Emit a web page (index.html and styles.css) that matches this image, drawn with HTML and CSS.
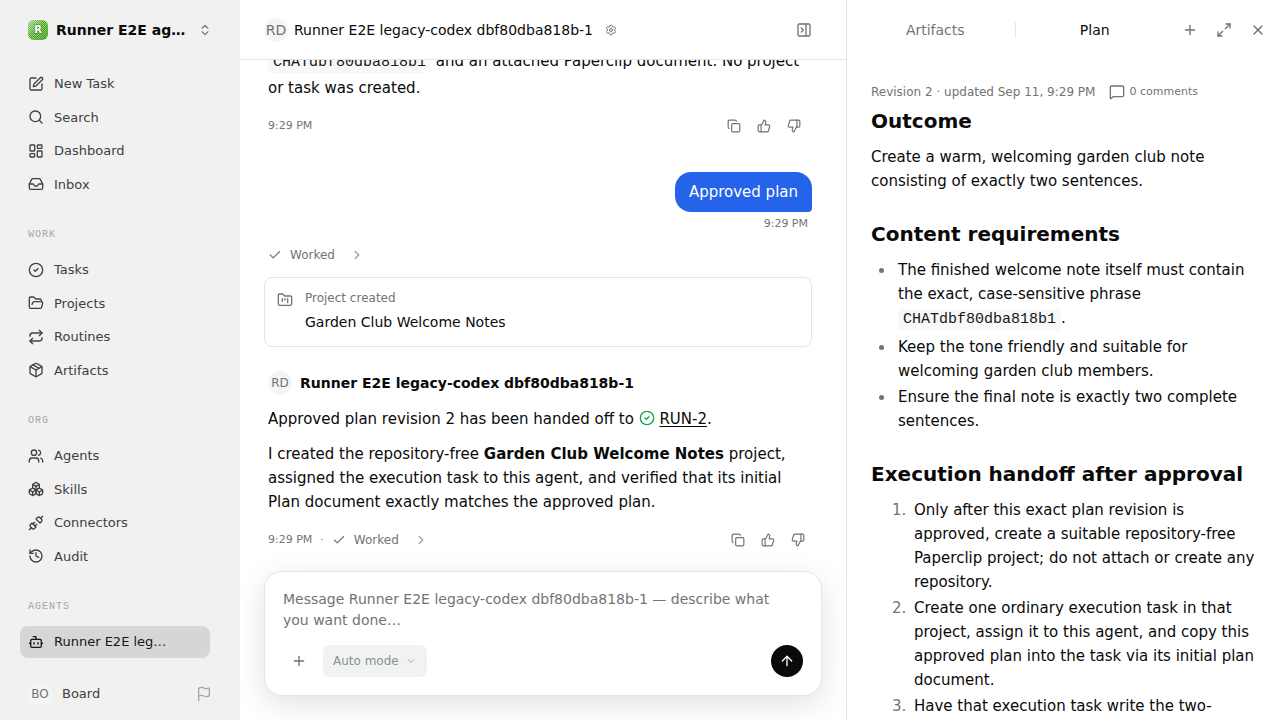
FILE: index.html
```html
<!DOCTYPE html>
<html lang="en">
<head>
<meta charset="utf-8">
<meta name="viewport" content="width=device-width, initial-scale=1">
<title>Runner E2E legacy-codex dbf80dba818b-1</title>
<link rel="stylesheet" href="styles.css">
</head>
<body>
<svg class="sprite" aria-hidden="true">
  <symbol id="pen" viewBox="0 0 24 24"><path d="M12 3H5a2 2 0 0 0-2 2v14a2 2 0 0 0 2 2h14a2 2 0 0 0 2-2v-7"/><path d="M18.375 2.625a1 1 0 0 1 3 3l-9.013 9.014a2 2 0 0 1-.853.505l-2.873.84a.5.5 0 0 1-.62-.62l.84-2.873a2 2 0 0 1 .506-.852z"/></symbol>
  <symbol id="search" viewBox="0 0 24 24"><circle cx="11" cy="11" r="8"/><path d="m21 21-4.3-4.3"/></symbol>
  <symbol id="dashboard" viewBox="0 0 24 24"><rect x="3" y="3" width="7" height="9" rx="1"/><rect x="14" y="3" width="7" height="5" rx="1"/><rect x="14" y="12" width="7" height="9" rx="1"/><rect x="3" y="16" width="7" height="5" rx="1"/></symbol>
  <symbol id="inbox" viewBox="0 0 24 24"><path d="M22 12h-6l-2 3h-4l-2-3H2"/><path d="M5.45 5.11 2 12v6a2 2 0 0 0 2 2h16a2 2 0 0 0 2-2v-6l-3.45-6.89A2 2 0 0 0 16.76 4H7.24a2 2 0 0 0-1.79 1.11z"/></symbol>
  <symbol id="circle-check" viewBox="0 0 24 24"><circle cx="12" cy="12" r="10"/><path d="m9 12 2 2 4-4"/></symbol>
  <symbol id="folder-open" viewBox="0 0 24 24"><path d="m6 14 1.5-2.9A2 2 0 0 1 9.24 10H20a2 2 0 0 1 1.94 2.5l-1.54 6a2 2 0 0 1-1.95 1.5H4a2 2 0 0 1-2-2V5a2 2 0 0 1 2-2h3.9a2 2 0 0 1 1.69.9l.81 1.2a2 2 0 0 0 1.67.9H18a2 2 0 0 1 2 2v2"/></symbol>
  <symbol id="repeat" viewBox="0 0 24 24"><path d="m17 2 4 4-4 4"/><path d="M3 11v-1a4 4 0 0 1 4-4h14"/><path d="m7 22-4-4 4-4"/><path d="M21 13v1a4 4 0 0 1-4 4H3"/></symbol>
  <symbol id="package" viewBox="0 0 24 24"><path d="M11 21.73a2 2 0 0 0 2 0l7-4A2 2 0 0 0 21 16V8a2 2 0 0 0-1-1.73l-7-4a2 2 0 0 0-2 0l-7 4A2 2 0 0 0 3 8v8a2 2 0 0 0 1 1.73z"/><path d="M12 22V12"/><path d="M3.29 7 12 12l8.71-5"/><path d="m7.5 4.27 9 5.15"/></symbol>
  <symbol id="users" viewBox="0 0 24 24"><path d="M16 21v-2a4 4 0 0 0-4-4H6a4 4 0 0 0-4 4v2"/><circle cx="9" cy="7" r="4"/><path d="M16 3.128a4 4 0 0 1 0 7.744"/><path d="M22 21v-2a4 4 0 0 0-3-3.87"/></symbol>
  <symbol id="boxes" viewBox="0 0 24 24"><path d="M2.97 12.92A2 2 0 0 0 2 14.63v3.24a2 2 0 0 0 .97 1.71l3 1.8a2 2 0 0 0 2.06 0L12 19v-5.5l-5-3-4.03 2.42Z"/><path d="m7 16.5-4.74-2.85"/><path d="m7 16.5 5-3"/><path d="M7 16.5v5.17"/><path d="M12 13.5V19l3.97 2.38a2 2 0 0 0 2.06 0l3-1.8a2 2 0 0 0 .97-1.71v-3.24a2 2 0 0 0-.97-1.71L17 10.5l-5 3Z"/><path d="m17 16.5-5-3"/><path d="m17 16.5 4.74-2.85"/><path d="M17 16.5v5.17"/><path d="M7.97 4.42A2 2 0 0 0 7 6.13v4.37l5 3 5-3V6.13a2 2 0 0 0-.97-1.71l-3-1.8a2 2 0 0 0-2.06 0l-3 1.8Z"/><path d="M12 8 7.26 5.15"/><path d="m12 8 4.74-2.85"/><path d="M12 13.5V8"/></symbol>
  <symbol id="unplug" viewBox="0 0 24 24"><path d="m19 5 3-3"/><path d="m2 22 3-3"/><path d="M6.3 20.3a2.4 2.4 0 0 0 3.4 0L12 18l-6-6-2.3 2.3a2.4 2.4 0 0 0 0 3.4Z"/><path d="M7.5 13.5 10 11"/><path d="M10.5 16.5 13 14"/><path d="m12 6 6 6 2.3-2.3a2.4 2.4 0 0 0 0-3.4l-2.6-2.6a2.4 2.4 0 0 0-3.4 0Z"/></symbol>
  <symbol id="history" viewBox="0 0 24 24"><path d="M3 12a9 9 0 1 0 9-9 9.75 9.75 0 0 0-6.74 2.74L3 8"/><path d="M3 3v5h5"/><path d="M12 7v5l4 2"/></symbol>
  <symbol id="bot" viewBox="0 0 24 24"><path d="M12 8V4H8"/><rect x="4" y="8" width="16" height="12" rx="2"/><path d="M2 14h2"/><path d="M20 14h2"/><path d="M15 13v2"/><path d="M9 13v2"/></symbol>
  <symbol id="flag" viewBox="0 0 24 24"><path d="M4 22V4a1 1 0 0 1 .4-.8A6 6 0 0 1 8 2c3 0 5 2 7.333 2q2 0 3.067-.8A1 1 0 0 1 20 4v10a1 1 0 0 1-.4.8A6 6 0 0 1 16 16c-3 0-5-2-8-2a6 6 0 0 0-4 1.528"/></symbol>
  <symbol id="up-down" viewBox="0 0 24 24"><path d="m7 15 5 5 5-5"/><path d="m7 9 5-5 5 5"/></symbol>
  <symbol id="settings" viewBox="0 0 24 24"><path d="M9.671 4.136a2.34 2.34 0 0 1 4.659 0 2.34 2.34 0 0 0 3.319 1.915 2.34 2.34 0 0 1 2.33 4.033 2.34 2.34 0 0 0 0 3.831 2.34 2.34 0 0 1-2.33 4.033 2.34 2.34 0 0 0-3.319 1.915 2.34 2.34 0 0 1-4.659 0 2.34 2.34 0 0 0-3.32-1.915 2.34 2.34 0 0 1-2.33-4.033 2.34 2.34 0 0 0 0-3.831A2.34 2.34 0 0 1 6.35 6.051a2.34 2.34 0 0 0 3.319-1.915"/><circle cx="12" cy="12" r="3"/></symbol>
  <symbol id="panel-close" viewBox="0 0 24 24"><rect x="3" y="3" width="18" height="18" rx="2"/><path d="M15 3v18"/><path d="m8 9 3 3-3 3"/></symbol>
  <symbol id="copy" viewBox="0 0 24 24"><rect x="8" y="8" width="14" height="14" rx="2"/><path d="M4 16c-1.1 0-2-.9-2-2V4c0-1.1.9-2 2-2h10c1.1 0 2 .9 2 2"/></symbol>
  <symbol id="thumb-up" viewBox="0 0 24 24"><path d="M15 5.88 14 10h5.83a2 2 0 0 1 1.92 2.56l-2.33 8A2 2 0 0 1 17.5 22H4a2 2 0 0 1-2-2v-8a2 2 0 0 1 2-2h2.76a2 2 0 0 0 1.79-1.11L12 2a3.13 3.13 0 0 1 3 3.88Z"/><path d="M7 10v12"/></symbol>
  <symbol id="thumb-down" viewBox="0 0 24 24"><path d="M17 14V2"/><path d="M9 18.12 10 14H4.17a2 2 0 0 1-1.92-2.56l2.33-8A2 2 0 0 1 6.5 2H20a2 2 0 0 1 2 2v8a2 2 0 0 1-2 2h-2.76a2 2 0 0 0-1.79 1.11L12 22a3.13 3.13 0 0 1-3-3.88Z"/></symbol>
  <symbol id="check" viewBox="0 0 24 24"><path d="M20 6 9 17l-5-5"/></symbol>
  <symbol id="chevron-right" viewBox="0 0 24 24"><path d="m9 18 6-6-6-6"/></symbol>
  <symbol id="chevron-down" viewBox="0 0 24 24"><path d="m6 9 6 6 6-6"/></symbol>
  <symbol id="kanban" viewBox="0 0 24 24"><path d="M4 20h16a2 2 0 0 0 2-2V8a2 2 0 0 0-2-2h-7.93a2 2 0 0 1-1.66-.9l-.82-1.2A2 2 0 0 0 7.93 3H4a2 2 0 0 0-2 2v13c0 1.1.9 2 2 2Z"/><path d="M8 10v4"/><path d="M12 10v2"/><path d="M16 10v6"/></symbol>
  <symbol id="comment" viewBox="0 0 24 24"><path d="M22 17a2 2 0 0 1-2 2H6.828a2 2 0 0 0-1.414.586l-2.202 2.202A.71.71 0 0 1 2 21.286V5a2 2 0 0 1 2-2h16a2 2 0 0 1 2 2z"/></symbol>
  <symbol id="plus" viewBox="0 0 24 24"><path d="M5 12h14"/><path d="M12 5v14"/></symbol>
  <symbol id="expand" viewBox="0 0 24 24"><path d="M15 3h6v6"/><path d="m21 3-7 7"/><path d="m3 21 7-7"/><path d="M9 21H3v-6"/></symbol>
  <symbol id="close" viewBox="0 0 24 24"><path d="M18 6 6 18"/><path d="m6 6 12 12"/></symbol>
  <symbol id="arrow-up" viewBox="0 0 24 24"><path d="m5 12 7-7 7 7"/><path d="M12 19V5"/></symbol>
</svg>

<div class="app">
  <aside class="sidebar">
    <button class="company" type="button">
      <svg class="company-logo" viewBox="0 0 20 20" aria-hidden="true">
        <defs>
          <linearGradient id="fade" x1="0" y1="0" x2="1" y2="1"><stop offset="0" stop-color="#fff"/><stop offset=".5" stop-color="#fff" stop-opacity=".75"/><stop offset="1" stop-color="#fff" stop-opacity=".25"/></linearGradient>
          <linearGradient id="glow" x1="0" y1="0" x2="1" y2="1"><stop offset="0" stop-color="#a9dc90"/><stop offset=".45" stop-color="#a9dc90" stop-opacity="0"/></linearGradient>
          <pattern id="dots" width="2" height="2" patternUnits="userSpaceOnUse"><path d="M0 0h1v1H0zM1 1h1v1H1z" fill="#b5e59c" shape-rendering="crispEdges"/></pattern>
          <mask id="dot-mask"><rect width="20" height="20" fill="url(#fade)"/></mask>
        </defs>
        <rect width="20" height="20" rx="6" fill="#48a022"/>
        <rect width="20" height="20" rx="6" fill="url(#glow)"/>
        <rect width="20" height="20" rx="6" fill="url(#dots)" mask="url(#dot-mask)"/>
        <text class="company-initial" x="10" y="13" text-anchor="middle">R</text>
      </svg>
      <span class="company-name">Runner E2E agents</span>
      <svg class="icon icon-14"><use href="#up-down"/></svg>
    </button>

    <nav class="nav">
      <div class="nav-group">
        <a class="nav-item" href="#"><svg class="icon"><use href="#pen"/></svg>New Task</a>
        <a class="nav-item" href="#"><svg class="icon"><use href="#search"/></svg>Search</a>
        <a class="nav-item" href="#"><svg class="icon"><use href="#dashboard"/></svg>Dashboard</a>
        <a class="nav-item" href="#"><svg class="icon"><use href="#inbox"/></svg>Inbox</a>
      </div>
      <h2 class="nav-label">WORK</h2>
      <div class="nav-group">
        <a class="nav-item" href="#"><svg class="icon"><use href="#circle-check"/></svg>Tasks</a>
        <a class="nav-item" href="#"><svg class="icon"><use href="#folder-open"/></svg>Projects</a>
        <a class="nav-item" href="#"><svg class="icon"><use href="#repeat"/></svg>Routines</a>
        <a class="nav-item" href="#"><svg class="icon"><use href="#package"/></svg>Artifacts</a>
      </div>
      <h2 class="nav-label">ORG</h2>
      <div class="nav-group">
        <a class="nav-item" href="#"><svg class="icon"><use href="#users"/></svg>Agents</a>
        <a class="nav-item" href="#"><svg class="icon"><use href="#boxes"/></svg>Skills</a>
        <a class="nav-item" href="#"><svg class="icon"><use href="#unplug"/></svg>Connectors</a>
        <a class="nav-item" href="#"><svg class="icon"><use href="#history"/></svg>Audit</a>
      </div>
      <h2 class="nav-label">AGENTS</h2>
      <div class="nav-group">
        <a class="nav-item nav-item-active" href="#" aria-current="page"><svg class="icon"><use href="#bot"/></svg><span class="nav-text">Runner E2E legacy-codex</span></a>
      </div>
    </nav>

    <div class="account">
      <span class="avatar">BO</span>
      <span class="account-name">Board</span>
      <button class="flag-button" type="button" aria-label="Feedback"><svg class="icon"><use href="#flag"/></svg></button>
    </div>
  </aside>

  <main class="chat">
    <header class="chat-header">
      <span class="avatar avatar-large">RD</span>
      <h1 class="chat-title">Runner E2E legacy-codex dbf80dba818b-1</h1>
      <button class="settings-button" type="button" aria-label="Agent settings"><svg class="icon icon-12"><use href="#settings"/></svg></button>
      <button class="icon-button push-right" type="button" aria-label="Close panel"><svg class="icon"><use href="#panel-close"/></svg></button>
    </header>

    <div class="messages">
      <article class="message inset">
        <p class="text"><code class="code">CHATdbf80dba818b1</code> and an attached Paperclip document. No project or task was created.</p>
        <div class="message-foot">
          <time class="time">9:29 PM</time>
          <div class="actions">
            <button class="action" type="button" aria-label="Copy"><svg class="icon icon-14"><use href="#copy"/></svg></button>
            <button class="action" type="button" aria-label="Helpful"><svg class="icon icon-14"><use href="#thumb-up"/></svg></button>
            <button class="action" type="button" aria-label="Not helpful"><svg class="icon icon-14"><use href="#thumb-down"/></svg></button>
          </div>
        </div>
      </article>

      <article class="sent">
        <p class="bubble">Approved plan</p>
        <time class="time sent-time">9:29 PM</time>
      </article>

      <button class="worked worked-row" type="button"><svg class="icon icon-14"><use href="#check"/></svg><span class="worked-label">Worked</span><svg class="icon icon-14 faint"><use href="#chevron-right"/></svg></button>

      <section class="project-card">
        <svg class="icon"><use href="#kanban"/></svg>
        <div class="project-body">
          <p class="project-kind">Project created</p>
          <p class="project-name">Garden Club Welcome Notes</p>
        </div>
      </section>

      <article class="message inset-left">
        <div class="author"><span class="avatar">RD</span><strong class="author-name">Runner E2E legacy-codex dbf80dba818b-1</strong></div>
        <div class="prose">
          <p class="text">Approved plan revision 2 has been handed off to <svg class="icon inline-icon"><use href="#circle-check"/></svg> <a class="task-link" href="#">RUN-2</a>.</p>
          <p class="text">I created the repository-free <strong>Garden Club Welcome Notes</strong> project, assigned the execution task to this agent, and verified that its initial Plan document exactly matches the approved plan.</p>
        </div>
        <div class="message-foot">
          <time class="time">9:29 PM</time>
          <span class="time dot">·</span>
          <button class="worked" type="button"><svg class="icon icon-14"><use href="#check"/></svg><span class="worked-label">Worked</span><svg class="icon icon-14 faint"><use href="#chevron-right"/></svg></button>
          <div class="actions">
            <button class="action" type="button" aria-label="Copy"><svg class="icon icon-14"><use href="#copy"/></svg></button>
            <button class="action" type="button" aria-label="Helpful"><svg class="icon icon-14"><use href="#thumb-up"/></svg></button>
            <button class="action" type="button" aria-label="Not helpful"><svg class="icon icon-14"><use href="#thumb-down"/></svg></button>
          </div>
        </div>
      </article>
    </div>

    <form class="composer">
      <textarea class="composer-input" rows="2" aria-label="Message" placeholder="Message Runner E2E legacy-codex dbf80dba818b-1 — describe what you want done…"></textarea>
      <div class="composer-bar">
        <button class="icon-button" type="button" aria-label="Attach"><svg class="icon"><use href="#plus"/></svg></button>
        <div class="mode">
          <select class="mode-select" aria-label="Mode" disabled><option>Auto mode</option></select>
          <svg class="icon icon-12 mode-chevron"><use href="#chevron-down"/></svg>
        </div>
        <button class="send" type="submit" aria-label="Send"><svg class="icon"><use href="#arrow-up"/></svg></button>
      </div>
    </form>
  </main>

  <aside class="panel">
    <header class="panel-header">
      <div class="tabs" role="tablist">
        <button class="tab" type="button" role="tab" aria-selected="false">Artifacts</button>
        <button class="tab tab-active" type="button" role="tab" aria-selected="true">Plan</button>
      </div>
      <div class="panel-tools">
        <button class="icon-button" type="button" aria-label="Add"><svg class="icon"><use href="#plus"/></svg></button>
        <button class="icon-button" type="button" aria-label="Expand"><svg class="icon"><use href="#expand"/></svg></button>
        <button class="icon-button" type="button" aria-label="Close"><svg class="icon"><use href="#close"/></svg></button>
      </div>
    </header>
    <div class="plan">
      <div class="plan-meta">
        <span>Revision 2 · updated Sep 11, 9:29 PM</span>
        <button class="comments" type="button"><svg class="icon"><use href="#comment"/></svg>0 comments</button>
      </div>
      <h2 class="plan-heading">Outcome</h2>
      <p class="text">Create a warm, welcoming garden club note consisting of exactly two sentences.</p>
      <h2 class="plan-heading">Content requirements</h2>
      <ul class="list bullets">
        <li>The finished welcome note itself must contain the exact, case-sensitive phrase <code class="code">CHATdbf80dba818b1</code>.</li>
        <li>Keep the tone friendly and suitable for welcoming garden club members.</li>
        <li>Ensure the final note is exactly two complete sentences.</li>
      </ul>
      <h2 class="plan-heading">Execution handoff after approval</h2>
      <ol class="list numbers">
        <li>Only after this exact plan revision is approved, create a suitable repository-free Paperclip project; do not attach or create any repository.</li>
        <li>Create one ordinary execution task in that project, assign it to this agent, and copy this approved plan into the task via its initial plan document.</li>
        <li>Have that execution task write the two-</li>
      </ol>
    </div>
  </aside>
</div>
</body>
</html>
```
FILE: styles.css
```css
:root {
  --ink: #0a0a0a;
  --muted: #737373;
  --line: #e5e5e5;
}

* { box-sizing: border-box; }

body {
  margin: 0;
  color: var(--ink);
  background: #fff;
  font-family: "DejaVu Sans", sans-serif;
  font-size: 15px;
  line-height: 24px;
}

h1, h2, p, ul, ol { margin: 0; padding: 0; }

button, select, textarea { font: inherit; color: inherit; }

button {
  padding: 0;
  border: 0;
  background: none;
  cursor: pointer;
}

.sprite { display: none; }

.icon {
  flex: none;
  width: 16px;
  height: 16px;
  fill: none;
  stroke: currentColor;
  stroke-width: 2;
  stroke-linecap: round;
  stroke-linejoin: round;
}
.icon-14 { width: 14px; height: 14px; }
.icon-12 { width: 12px; height: 12px; }
.faint { opacity: .7; }

.app {
  display: grid;
  grid-template-columns: 240px minmax(0, 303fr) minmax(0, 217fr);
  height: 100vh;
  overflow: hidden;
}

/* Sidebar */
.sidebar {
  display: flex;
  flex-direction: column;
  min-height: 0;
  background: #f1f1f1;
  color: #404040;
}

.company {
  display: flex;
  flex: none;
  align-items: center;
  gap: 8px;
  height: 60px;
  padding: 0 28px;
  text-align: left;
}
.company .icon { color: var(--muted); }
.company-logo { flex: none; width: 20px; height: 20px; }
.company-initial {
  fill: #fff;
  stroke: #3b6b28;
  stroke-width: 1px;
  paint-order: stroke;
  font-size: 10px;
  font-weight: 700;
}
.company-name {
  flex: 1;
  overflow: hidden;
  color: var(--ink);
  font-size: 14px;
  font-weight: 700;
  text-overflow: ellipsis;
  white-space: nowrap;
}

.nav {
  flex: 1;
  min-height: 0;
  overflow: hidden;
  padding: 8px 30px 0 20px;
}
.nav-group {
  display: grid;
  grid-template-columns: minmax(0, 1fr);
  gap: 2px;
}
.nav-item {
  display: flex;
  align-items: center;
  gap: 10px;
  padding: 6px 8px;
  border-radius: 8px;
  color: inherit;
  font-size: 13px;
  line-height: 1.5;
  text-decoration: none;
}
.nav-item-active {
  padding-right: 40px;
  background: #d6d6d6;
  color: #171717;
}
.nav-text {
  overflow: hidden;
  text-overflow: ellipsis;
  white-space: nowrap;
}
.nav-label {
  margin: 25px 8px 9px;
  color: #a6a6a6;
  font-family: "Liberation Mono", monospace;
  font-size: 10px;
  font-weight: 400;
  letter-spacing: 1px;
  line-height: 20px;
}

.account {
  display: flex;
  align-items: center;
  gap: 10px;
  padding: 10px 28px 14px;
  font-size: 13px;
}
.flag-button {
  display: flex;
  margin-left: auto;
  color: #a6a6a6;
}

.avatar {
  display: flex;
  flex: none;
  align-items: center;
  justify-content: center;
  width: 24px;
  height: 24px;
  border-radius: 50%;
  background: #f5f5f5;
  color: var(--muted);
  font-size: 12px;
}
.avatar-large { font-size: 14px; }

/* Chat */
.chat {
  display: flex;
  flex-direction: column;
  min-width: 0;
  min-height: 0;
}
.chat-header {
  display: flex;
  flex: none;
  align-items: center;
  height: 60px;
  padding: 0 26px 0 24px;
  border-bottom: 1px solid var(--line);
}
.chat-title {
  margin-left: 6px;
  font-size: 14px;
  font-weight: 400;
}
.settings-button {
  display: flex;
  margin-left: 12px;
  color: var(--muted);
}
.icon-button {
  display: flex;
  flex: none;
  align-items: center;
  justify-content: center;
  width: 32px;
  height: 32px;
  color: var(--muted);
}
.push-right { margin-left: auto; }

.messages {
  display: flex;
  flex: 1;
  flex-direction: column;
  justify-content: flex-end;
  min-height: 0;
  overflow: hidden;
  padding: 0 34px 17px 24px;
}
.message {
  display: flex;
  flex-direction: column;
  gap: 12px;
}
.inset { padding: 0 4px; }
.inset-left { padding-left: 4px; }
.prose { display: grid; gap: 11px; }

.code {
  padding: 2px 5px;
  border-radius: 4px;
  background: #f8f8f8;
  color: #171717;
  font-family: "Liberation Mono", monospace;
  font-size: 15px;
  line-height: 26px;
}

.message-foot {
  display: flex;
  align-items: center;
  height: 28px;
}
.time {
  color: var(--muted);
  font-size: 11px;
  line-height: 16px;
}
.dot { margin: 0 8px; }
.actions {
  display: flex;
  gap: 2px;
  margin-left: auto;
}
.action {
  display: flex;
  align-items: center;
  justify-content: center;
  width: 28px;
  height: 28px;
  color: var(--muted);
}

.sent {
  display: flex;
  flex-direction: column;
  align-items: flex-end;
  gap: 4px;
  margin-top: 32px;
}
.bubble {
  padding: 8px 14px;
  border-radius: 16px 16px 4px 16px;
  background: #2563eb;
  color: #fff;
}
.sent-time { margin-right: 4px; }

.worked {
  display: flex;
  align-items: center;
  gap: 8px;
  color: var(--muted);
  font-size: 12px;
  line-height: 20px;
}
.worked-label { margin-right: 7px; }
.worked-row { margin: 13px 0 12px 4px; }

.project-card {
  display: flex;
  gap: 12px;
  padding: 12px 12px 14px;
  border: 1px solid var(--line);
  border-radius: 8px;
  margin-bottom: 24px;
}
.project-card .icon { margin-top: 2px; color: var(--muted); }
.project-body { display: grid; gap: 6px; }
.project-kind {
  color: var(--muted);
  font-size: 12px;
  line-height: 16px;
}
.project-name { font-size: 14px; line-height: 20px; }

.author {
  display: flex;
  align-items: center;
  gap: 8px;
}
.author-name { font-size: 14px; }
.inline-icon {
  color: #16a34a;
  vertical-align: -2px;
}
.task-link {
  color: inherit;
  text-decoration: underline;
  text-underline-offset: 2px;
}

.composer {
  display: grid;
  gap: 14px;
  margin: 0 24px 24px;
  padding: 17px 18px 18px;
  border: 1px solid var(--line);
  border-radius: 18px;
  background: #fff;
  box-shadow: 0 8px 30px rgba(0, 0, 0, .12);
}
.composer-input {
  display: block;
  width: 100%;
  height: 42px;
  padding: 0 20px 0 0;
  border: 0;
  outline: 0;
  resize: none;
  overflow: hidden;
  background: none;
  font-size: 14px;
  line-height: 21px;
}
.composer-input::placeholder { color: var(--muted); opacity: 1; }
.composer-bar {
  display: flex;
  align-items: center;
  gap: 8px;
}
.mode {
  display: flex;
  position: relative;
}
.mode-select {
  appearance: none;
  height: 32px;
  padding: 0 28px 0 10px;
  border: 0;
  border-radius: 6px;
  background: #f1f3f3;
  color: #8c9092;
  font-size: 12px;
  opacity: 1;
}
.mode-chevron {
  position: absolute;
  top: 10px;
  right: 10px;
  color: #a6a6a6;
  pointer-events: none;
}
.send {
  display: flex;
  align-items: center;
  justify-content: center;
  width: 32px;
  height: 32px;
  margin-left: auto;
  border-radius: 50%;
  background: var(--ink);
  color: #fff;
}

/* Plan panel */
.panel {
  display: flex;
  flex-direction: column;
  min-width: 0;
  min-height: 0;
  border-left: 1px solid var(--line);
}
.panel-header {
  display: flex;
  flex: none;
  align-items: center;
  height: 60px;
  padding: 0 6px 0 9px;
}
.tabs {
  display: flex;
  flex: 1;
}
.tab {
  flex: 1;
  color: var(--muted);
  font-size: 14px;
  line-height: 16px;
}
.tab-active {
  border-left: 1px solid var(--line);
  color: var(--ink);
}
.panel-tools { display: flex; gap: 2px; }

.plan {
  flex: 1;
  min-height: 0;
  overflow: hidden;
  padding: 24px;
}
.plan-meta {
  display: flex;
  align-items: center;
  gap: 14px;
  color: var(--muted);
  font-size: 12px;
  line-height: 16px;
}
.comments {
  display: flex;
  align-items: center;
  gap: 4px;
  font-size: 11px;
}
.plan-heading {
  margin: 27px 0 10px;
  font-size: 20px;
  font-weight: 700;
  line-height: 28px;
}
.plan-meta + .plan-heading { margin-top: 7px; }
.list { display: grid; gap: 2px; }
.list li { padding-left: 3px; }
.bullets { padding-left: 24px; }
.numbers { padding-left: 40px; }
.list li::marker { color: var(--muted); }
```
